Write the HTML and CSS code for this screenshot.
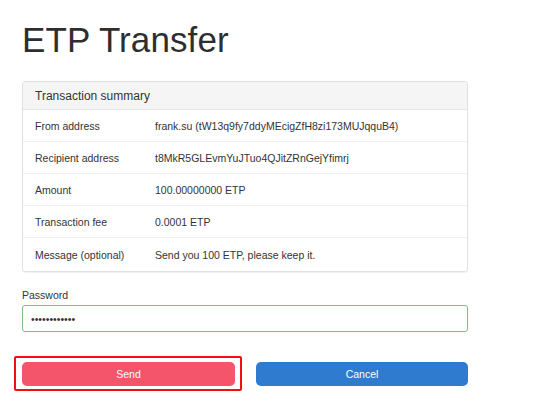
FILE: index.html
```html
<!DOCTYPE html>
<html lang="en">
<head>
<meta charset="utf-8">
<title>ETP Transfer</title>
<link rel="stylesheet" href="styles.css">
</head>
<body>
<main class="page">
  <h1 class="title">ETP Transfer</h1>
  <section class="panel">
    <div class="panel-heading">Transaction summary</div>
    <div class="row"><span class="label">From address</span><span class="value">frank.su (tW13q9fy7ddyMEcigZfH8zi173MUJqquB4)</span></div>
    <div class="row"><span class="label">Recipient address</span><span class="value">t8MkR5GLEvmYuJTuo4QJitZRnGejYfimrj</span></div>
    <div class="row"><span class="label">Amount</span><span class="value">100.00000000 ETP</span></div>
    <div class="row"><span class="label">Transaction fee</span><span class="value">0.0001 ETP</span></div>
    <div class="row row-last"><span class="label">Message (optional)</span><span class="value">Send you 100 ETP, please keep it.</span></div>
  </section>
  <div class="field">
    <label class="field-label" for="pw">Password</label>
    <input class="input" id="pw" type="password" value="************">
  </div>
  <div class="actions">
    <div class="highlight"><button class="btn btn-send" type="button">Send</button></div>
    <button class="btn btn-cancel" type="button">Cancel</button>
  </div>
</main>
</body>
</html>
```

FILE: styles.css
```css
* { box-sizing: border-box; }
html, body { margin: 0; padding: 0; background: #fff; }
body {
  font-family: "Liberation Sans", Arial, Helvetica, sans-serif;
  color: #333;
  font-size: 10.5px;
}
.page {
  width: 446px;
  margin-left: 22px;
  padding-bottom: 20px;
  display: flex;
  flex-direction: column;
}
.title {
  margin: 20px 0 21px;
  font-size: 35px;
  line-height: 40px;
  font-weight: 400;
  color: #2e2e2e;
  letter-spacing: 0.1px;
}
.panel {
  border: 1px solid #e1e1e1;
  border-radius: 3px;
  box-shadow: 0 1px 1px rgba(0,0,0,0.06);
  overflow: hidden;
}
.panel-heading {
  height: 28px;
  line-height: 28px;
  padding: 0 12px;
  font-size: 12px;
  background: #f5f5f5;
  border-bottom: 1px solid #e6e6e6;
}
.row {
  display: grid;
  grid-template-columns: 120px 1fr;
  height: 32px;
  align-items: center;
  padding: 0 12px;
  border-bottom: 1px solid #f1f1f1;
}
.row-last { border-bottom: none; height: 33px; }
.field {
  display: flex;
  flex-direction: column;
  margin-top: 17px;
}
.field-label {
  font-size: 10.5px;
  line-height: 12px;
  margin-bottom: 4px;
}
.input {
  height: 27px;
  border: 1px solid #7dbf7f;
  border-radius: 3px;
  padding: 0 8px;
  font-family: "Liberation Sans", Arial, sans-serif;
  font-size: 10.5px;
  color: #333;
  outline: none;
  background: #fff;
}
.actions {
  display: grid;
  grid-template-columns: 213px 212px;
  column-gap: 21px;
  margin-top: 30px;
}
.highlight { position: relative; display: flex; }
.highlight::after {
  content: "";
  position: absolute;
  top: -6px; bottom: -5px; left: -8px; right: -7px;
  border: 2px solid #f20f0f;
  border-radius: 2px;
  pointer-events: none;
}
.btn {
  width: 100%;
  height: 24px;
  border: none;
  border-radius: 5px;
  color: #fff;
  font-family: "Liberation Sans", Arial, sans-serif;
  font-size: 10.5px;
  padding: 0;
}
.btn-send { background: #f5556a; }
.btn-cancel { background: #2e7bcf; }
```
